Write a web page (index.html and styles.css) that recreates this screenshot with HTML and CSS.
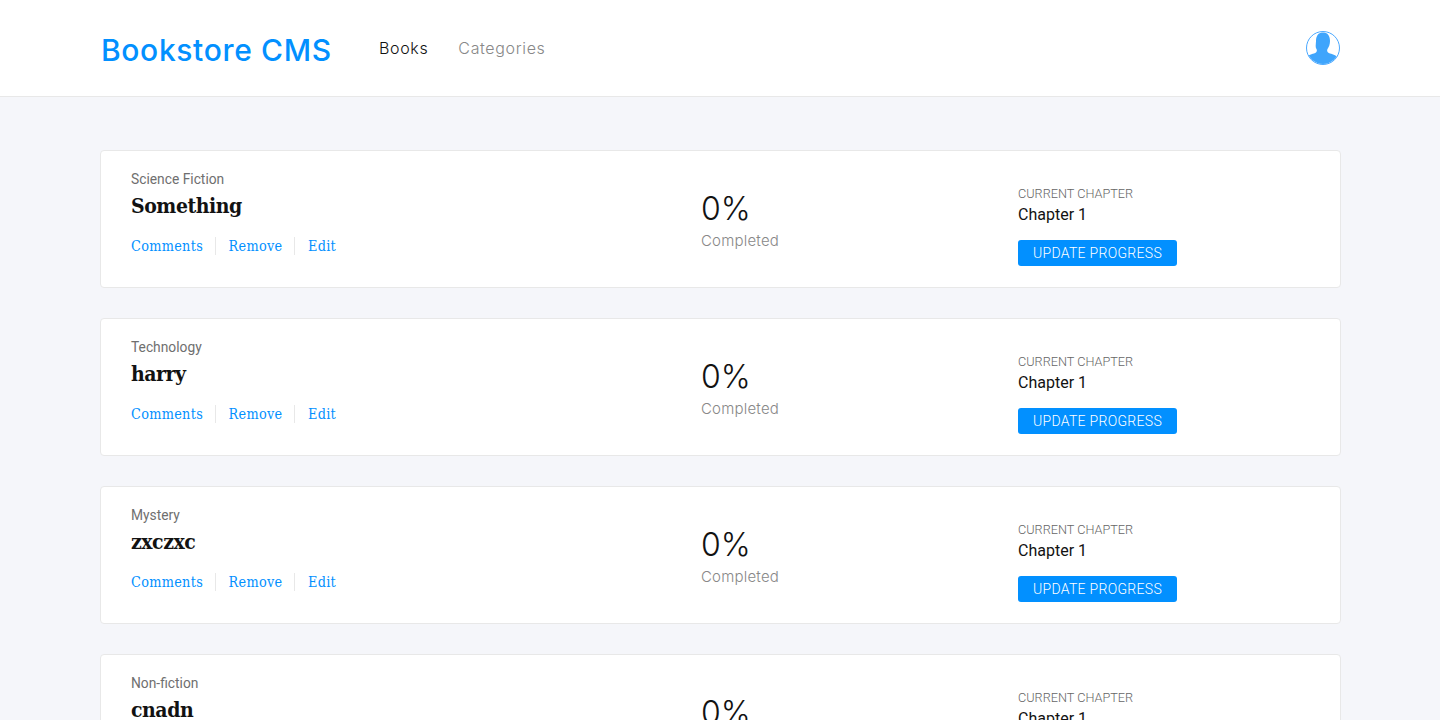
FILE: index.html
```html
<!DOCTYPE html>
<html lang="en">
<head>
<meta charset="utf-8">
<title>Bookstore CMS</title>
<link rel="stylesheet" href="styles.css">
</head>
<body>
<header class="header">
  <div class="brand">Bookstore CMS</div>
  <nav class="nav">
    <a class="nav-link active">Books</a>
    <a class="nav-link">Categories</a>
  </nav>
  <div class="avatar">
    <svg viewBox="0 0 36 36" width="36" height="36">
      <defs><clipPath id="c"><circle cx="18" cy="18" r="16"/></clipPath></defs>
      <circle cx="18" cy="18" r="16.500" fill="#fff" stroke="#4ba9ff" stroke-width="1"/>
      <path clip-path="url(#c)" fill="#3fa5fc" d="M11 11c0-6 3-8.500 7-8.500s7 2.500 7 8.500c0 3-1 6-2.500 8-.6 1-.5 2.500.5 3.500 2 1.500 7 1.500 9 4.500l2 9H0l2-9c2-3 7-3 9-4.500 1-1 1.100-2.500.5-3.500C10 17 11 14 11 11z"/>
    </svg>
  </div>
</header>
<main class="books">
  <article class="card">
    <div class="info">
      <div class="category">Science Fiction</div>
      <h2 class="title">Something</h2>
      <div class="actions"><a class="action">Comments</a><a class="action">Remove</a><a class="action">Edit</a></div>
    </div>
    <div class="progress"><div class="percent">0%</div><div class="completed">Completed</div></div>
    <div class="chapter"><div class="chapter-label">CURRENT CHAPTER</div><div class="chapter-name">Chapter 1</div><button class="update">UPDATE PROGRESS</button></div>
  </article>
  <article class="card">
    <div class="info">
      <div class="category">Technology</div>
      <h2 class="title">harry</h2>
      <div class="actions"><a class="action">Comments</a><a class="action">Remove</a><a class="action">Edit</a></div>
    </div>
    <div class="progress"><div class="percent">0%</div><div class="completed">Completed</div></div>
    <div class="chapter"><div class="chapter-label">CURRENT CHAPTER</div><div class="chapter-name">Chapter 1</div><button class="update">UPDATE PROGRESS</button></div>
  </article>
  <article class="card">
    <div class="info">
      <div class="category">Mystery</div>
      <h2 class="title">zxczxc</h2>
      <div class="actions"><a class="action">Comments</a><a class="action">Remove</a><a class="action">Edit</a></div>
    </div>
    <div class="progress"><div class="percent">0%</div><div class="completed">Completed</div></div>
    <div class="chapter"><div class="chapter-label">CURRENT CHAPTER</div><div class="chapter-name">Chapter 1</div><button class="update">UPDATE PROGRESS</button></div>
  </article>
  <article class="card">
    <div class="info">
      <div class="category">Non-fiction</div>
      <h2 class="title">cnadn</h2>
      <div class="actions"><a class="action">Comments</a><a class="action">Remove</a><a class="action">Edit</a></div>
    </div>
    <div class="progress"><div class="percent">0%</div><div class="completed">Completed</div></div>
    <div class="chapter"><div class="chapter-label">CURRENT CHAPTER</div><div class="chapter-name">Chapter 1</div><button class="update">UPDATE PROGRESS</button></div>
  </article>
</main>
</body>
</html>
```
FILE: styles.css
```css
* { box-sizing: border-box; }
html, body { margin: 0; height: 720px; overflow: hidden; }
body { background: #f5f6fa; font-family: Roboto, sans-serif; }

.header {
  height: 97px;
  background: #fff;
  border-bottom: 1px solid #e8e8e8;
  display: flex;
  align-items: center;
  padding: 0 99px 0 101px;
}
.brand {
  font-family: Inter, sans-serif;
  font-size: 30px;
  font-weight: 500;
  line-height: 36px;
  color: #0290ff;
  margin-top: 4px;
  width: 278px;
  letter-spacing: 0.65px;
}
.nav { display: flex; gap: 30px; flex: 1; }
.nav-link {
  font-family: Inter, sans-serif;
  font-size: 16px;
  font-weight: 300;
  letter-spacing: 0.65px;
  color: #121212;
}
.nav-link:not(.active) { color: #888; }
.avatar { width: 36px; height: 36px; }
.avatar svg { display: block; }

.books {
  padding: 53px 99px 0 100px;
  display: flex;
  flex-direction: column;
  gap: 30px;
}
.card {
  flex: none;
  height: 138px;
  background: #fff;
  border: 1px solid #e8e8e8;
  border-radius: 4px;
  display: flex;
  padding: 20px 30px 0;
}
.info { width: 570px; }
.category {
  font-size: 13.800px;
  font-weight: 400;
  line-height: 17px;
  color: #6f6f6f;
}
.title {
  margin: 3px 0 0;
  font-family: "DejaVu Serif Condensed", "DejaVu Serif", serif;
  font-size: 21px;
  font-weight: 700;
  line-height: 30px;
  color: #121212;
  letter-spacing: -0.45px;
}
.actions { display: flex; margin-top: 16px; }
.action {
  font-family: "DejaVu Serif Condensed", "DejaVu Serif", serif;
  font-size: 14.300px;
  font-weight: 400;
  line-height: 18px;
  letter-spacing: 0.3px;
  color: #0290ff;
  padding-right: 12px;
  margin-right: 12.500px;
  border-right: 1px solid #e8e8e8;
}
.action:last-child { border: 0; padding: 0; margin: 0; }

.progress { width: 317px; padding-top: 18px; }
.percent {
  font-family: Inter, sans-serif;
  font-size: 32px;
  font-weight: 300;
  line-height: 40px;
  color: #121212;
}
.completed {
  font-family: Inter, sans-serif;
  font-size: 15px;
  font-weight: 300;
  line-height: 24px;
  letter-spacing: 0.2px;
  color: #888;
}
.chapter { padding-top: 15px; }
.chapter-label {
  font-size: 12.700px;
  font-weight: 300;
  line-height: 16px;
  color: #666;
}
.chapter-name {
  margin-top: 2px;
  font-size: 16px;
  line-height: 22px;
  color: #121212;
}
.update {
  display: block;
  margin-top: 14px;
  width: 159px;
  height: 26px;
  padding: 0;
  border: 0;
  border-radius: 3px;
  background: #0290ff;
  color: #fff;
  font-family: Roboto, sans-serif;
  font-size: 14px;
  font-weight: 300;
  letter-spacing: 0.3px;
}
```
